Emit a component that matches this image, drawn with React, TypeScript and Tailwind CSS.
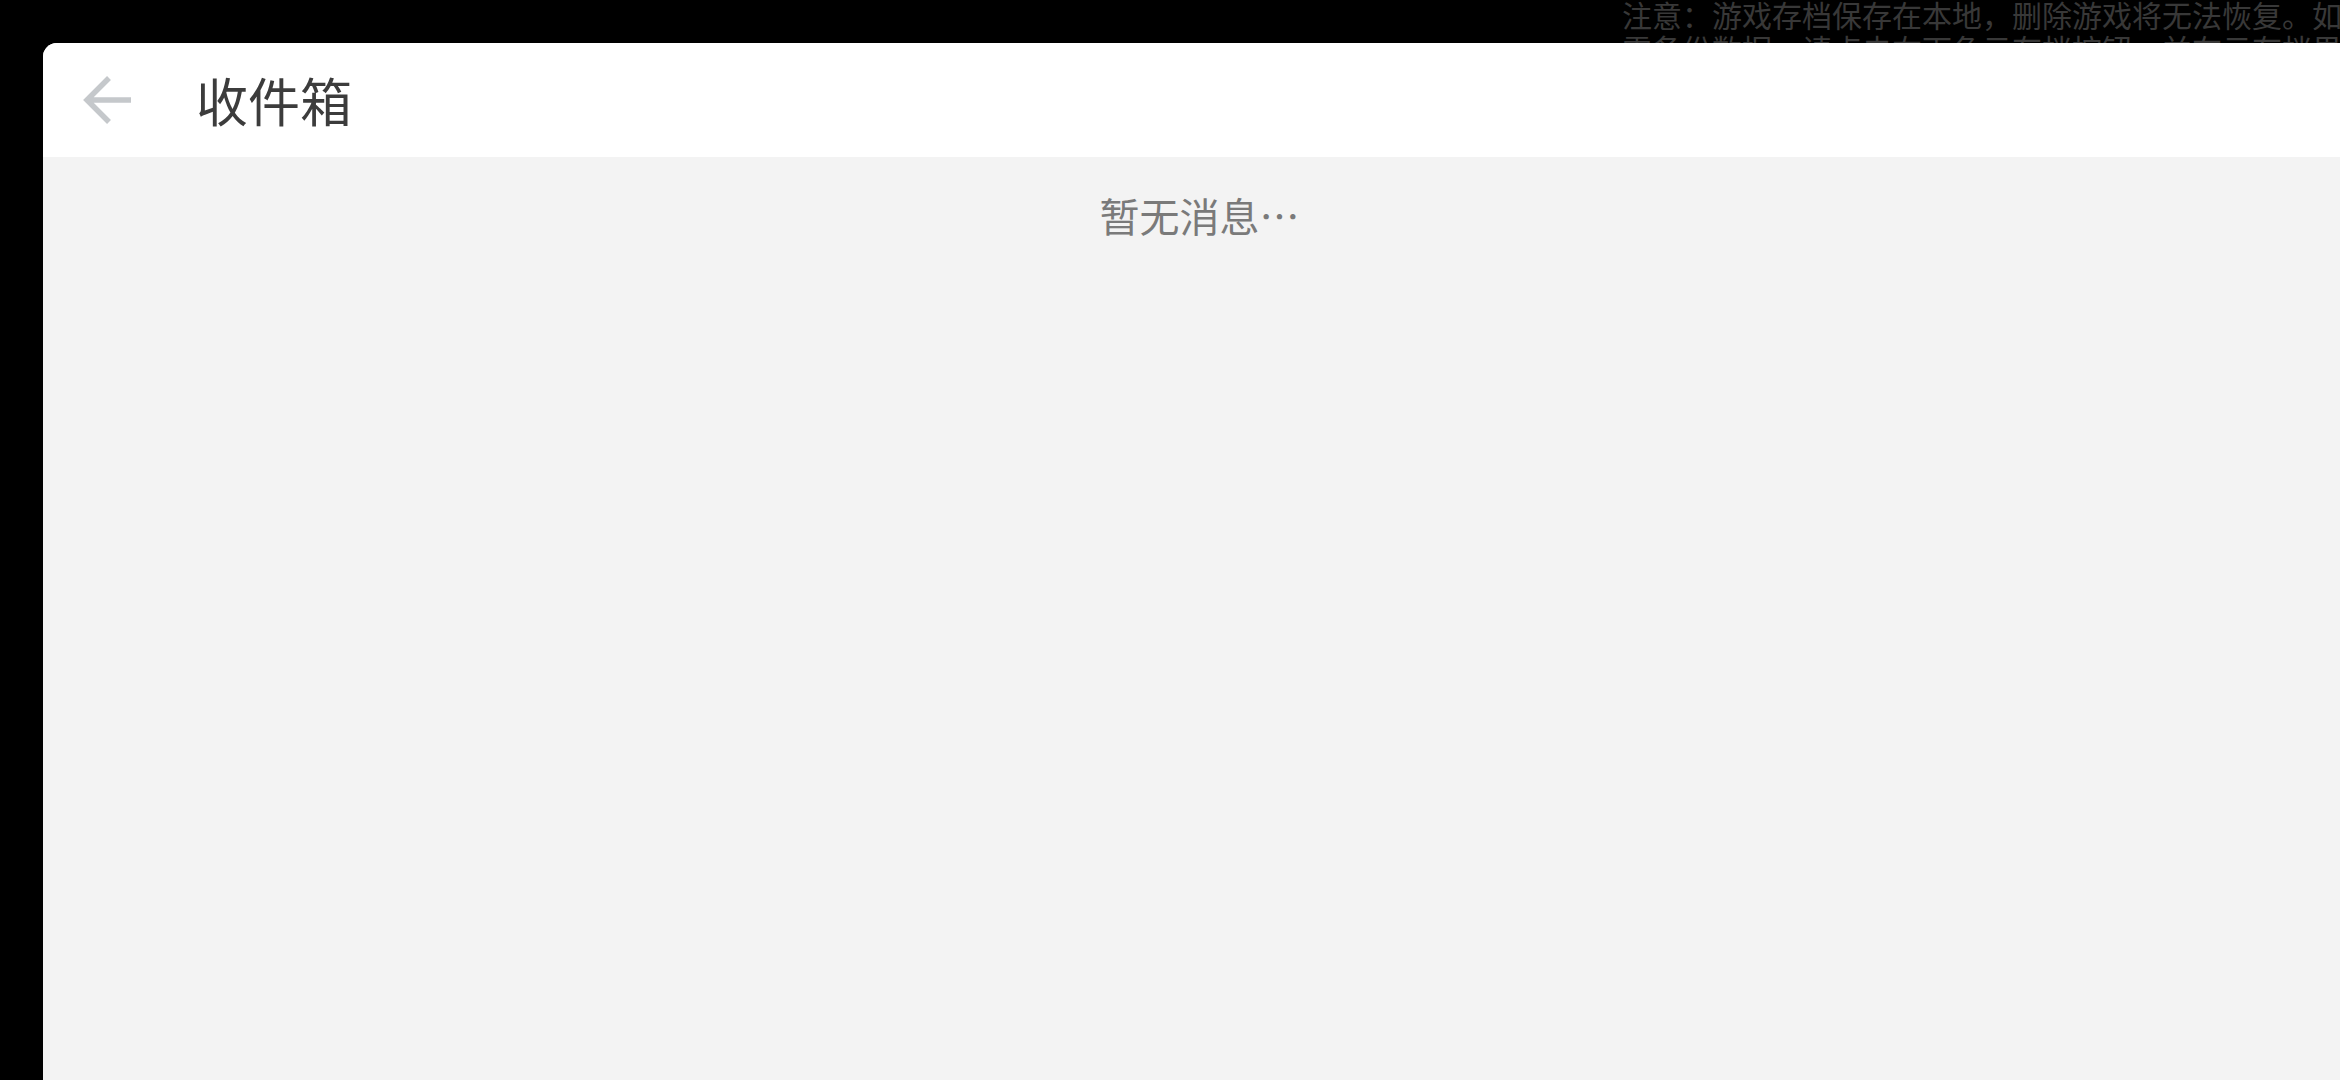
import React from 'react';

const cjk = "font-['Noto_Sans_CJK_SC','Noto_Sans',sans-serif]";

const BackIcon: React.FC = () => (
  <svg width="50" height="50" viewBox="0 0 50 50" fill="none" className="shrink-0">
    <path
      d="M4 25 H48 M26 3 L4 25 L26 47"
      stroke="#c5c8cb"
      strokeWidth="5.5"
      strokeLinejoin="miter"
      strokeLinecap="butt"
    />
  </svg>
);

const App: React.FC = () => {
  return (
    <div className={`w-[2340px] h-[1080px] bg-black flex flex-col overflow-hidden ${cjk}`}>
      {/* notice behind the dialog */}
      <div className="h-[43px] shrink-0 overflow-hidden pl-[1622px] whitespace-nowrap text-[30px] leading-[34px] text-[#383838]">
        <div className="-mt-[3px]">
          <div>注意：游戏存档保存在本地，删除游戏将无法恢复。如</div>
          <div>需备份数据，请点击右下角云存档按钮，并在云存档界面</div>
        </div>
      </div>

      <div className="flex-1 ml-[43px] bg-[#f3f3f3] rounded-tl-[14px] overflow-hidden flex flex-col">
        <header className="h-[114px] shrink-0 bg-white flex items-center pl-[40px]">
          <BackIcon />
          <h1 className="ml-[63px] text-[52px] leading-[52px] font-normal text-[#3c3c3c]">收件箱</h1>
        </header>
        <main className="flex-1 flex justify-center pt-[38px]">
          <p className="text-[40px] leading-[40px] text-[#7a7a7a] pl-[20px]">
            暂无消息<span className="tracking-[4px]">…</span>
          </p>
        </main>
      </div>
    </div>
  );
};

export default App;
